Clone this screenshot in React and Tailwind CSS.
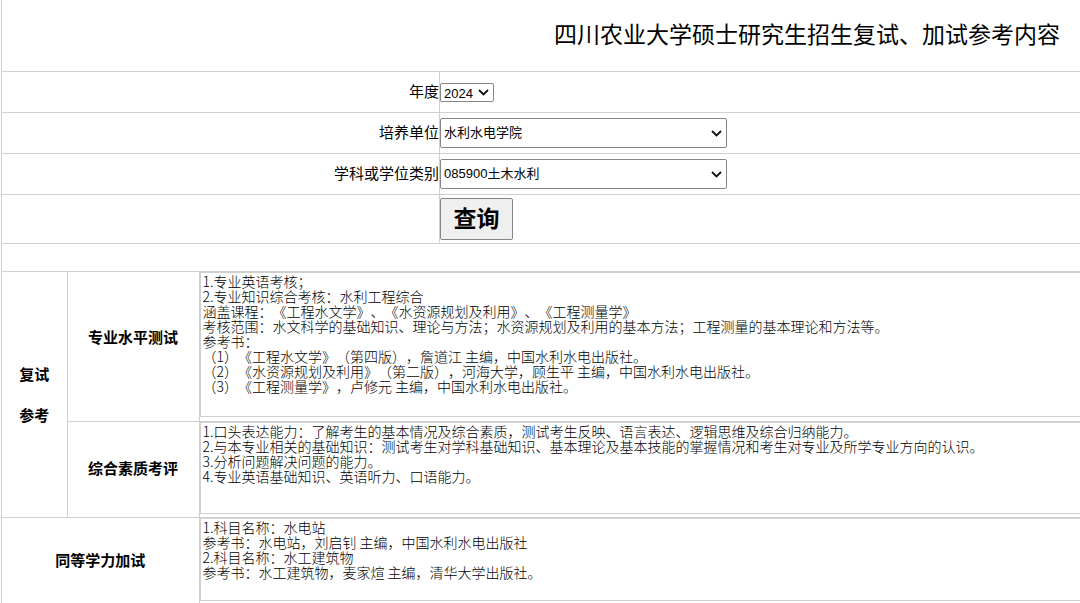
import { useState } from "react";

const years = ["2024", "2023", "2022"];
const colleges = ["水利水电学院"];
const subjects = ["085900土木水利"];

const levelTest = `1.专业英语考核；
2.专业知识综合考核：水利工程综合
涵盖课程：《工程水文学》、《水资源规划及利用》、《工程测量学》
考核范围：水文科学的基础知识、理论与方法；水资源规划及利用的基本方法；工程测量的基本理论和方法等。
参考书：
（1）《工程水文学》（第四版），詹道江 主编，中国水利水电出版社。
（2）《水资源规划及利用》（第二版），河海大学，顾生平 主编，中国水利水电出版社。
（3）《工程测量学》，卢修元 主编，中国水利水电出版社。`;

const qualityTest = `1.口头表达能力：了解考生的基本情况及综合素质，测试考生反映、语言表达、逻辑思维及综合归纳能力。
2.与本专业相关的基础知识：测试考生对学科基础知识、基本理论及基本技能的掌握情况和考生对专业及所学专业方向的认识。
3.分析问题解决问题的能力。
4.专业英语基础知识、英语听力、口语能力。`;

const extraTest = `1.科目名称：水电站
参考书：水电站，刘启钊 主编，中国水利水电出版社
2.科目名称：水工建筑物
参考书：水工建筑物，麦家煊 主编，清华大学出版社。`;

const labelClass =
  "flex w-[438px] shrink-0 items-center justify-end self-stretch border-r border-[#d0d0d0] text-[15px]";
const areaClass =
  "block w-full resize-none overflow-hidden border border-r-0 border-[#d0d0d0] px-0.5 py-px font-['Noto_Sans_CJK_SC',monospace] text-[14px] leading-[15px] font-light text-black outline-none [text-spacing-trim:space-all]";

const SelectRow = ({ id, label, items, value, onChange, size }) => (
  <div className="flex h-[41px] items-center border-t border-[#d0d0d0]">
    <label htmlFor={id} className={labelClass}>
      {label}
    </label>
    <div className={`relative ${size}`}>
      <select
        id={id}
        value={value}
        onChange={(e) => onChange(e.target.value)}
        className="block h-full w-full appearance-none rounded-xs border border-[#858585] bg-white pl-[3px] text-[13px] text-black"
      >
        {items.map((item) => (
          <option key={item} value={item}>
            {item}
          </option>
        ))}
      </select>
      <svg
        className="pointer-events-none absolute inset-y-0 right-[5px] my-auto h-[7px] w-[11px]"
        viewBox="0 0 11 7"
        fill="none"
        stroke="#111"
        strokeWidth="1.8"
      >
        <path d="M1 1l4.5 4.5L10 1" />
      </svg>
    </div>
  </div>
);

const App = () => {
  const [year, setYear] = useState(years[0]);
  const [college, setCollege] = useState(colleges[0]);
  const [subject, setSubject] = useState(subjects[0]);

  return (
    <main className="ml-px h-screen overflow-hidden border-l border-[#d0d0d0] bg-white font-['Liberation_Sans','Noto_Sans_CJK_SC',sans-serif] text-black">
      <h1 className="flex h-[71px] items-center justify-end pr-5 text-[23px]">
        四川农业大学硕士研究生招生复试、加试参考内容
      </h1>

      <form onSubmit={(e) => e.preventDefault()}>
        <SelectRow
          id="year"
          label="年度"
          items={years}
          value={year}
          onChange={setYear}
          size="h-[19px] w-[54px]"
        />
        <SelectRow
          id="college"
          label="培养单位"
          items={colleges}
          value={college}
          onChange={setCollege}
          size="h-[30px] w-[287px]"
        />
        <SelectRow
          id="subject"
          label="学科或学位类别"
          items={subjects}
          value={subject}
          onChange={setSubject}
          size="h-[30px] w-[287px]"
        />
        <div className="flex h-[49px] items-center border-t border-[#d0d0d0]">
          <div className={labelClass} />
          <button
            type="submit"
            className="h-[42px] w-[73px] rounded-xs border border-[#858585] bg-[#efefef] text-[23px] font-bold"
          >
            查询
          </button>
        </div>
      </form>

      <div className="h-7 border-t border-[#d0d0d0]" />

      <table className="w-full table-fixed border-collapse border-t border-[#d0d0d0] text-[15px]">
        <colgroup>
          <col className="w-[65px]" />
          <col className="w-[132px]" />
          <col />
        </colgroup>
        <tbody>
          <tr>
            <th rowSpan={2} className="border-r border-[#d0d0d0] leading-[41px]">
              复试
              <br />
              参考
            </th>
            <th id="level" className="border-r border-b border-[#d0d0d0] pb-4">
              专业水平测试
            </th>
            <td className="border-b border-[#d0d0d0] pb-1">
              <textarea
                readOnly
                aria-labelledby="level"
                value={levelTest}
                className={`${areaClass} h-[145px]`}
              />
            </td>
          </tr>
          <tr>
            <th id="quality" className="border-r border-[#d0d0d0]">
              综合素质考评
            </th>
            <td className="pb-[3px]">
              <textarea
                readOnly
                aria-labelledby="quality"
                value={qualityTest}
                className={`${areaClass} h-[92px]`}
              />
            </td>
          </tr>
          <tr>
            <th
              id="extra"
              colSpan={2}
              className="border-t border-r border-[#d0d0d0]"
            >
              同等学力加试
            </th>
            <td className="border-t border-[#d0d0d0] pb-1">
              <textarea
                readOnly
                aria-labelledby="extra"
                value={extraTest}
                className={`${areaClass} h-[83px]`}
              />
            </td>
          </tr>
        </tbody>
      </table>
    </main>
  );
};

export default App;
